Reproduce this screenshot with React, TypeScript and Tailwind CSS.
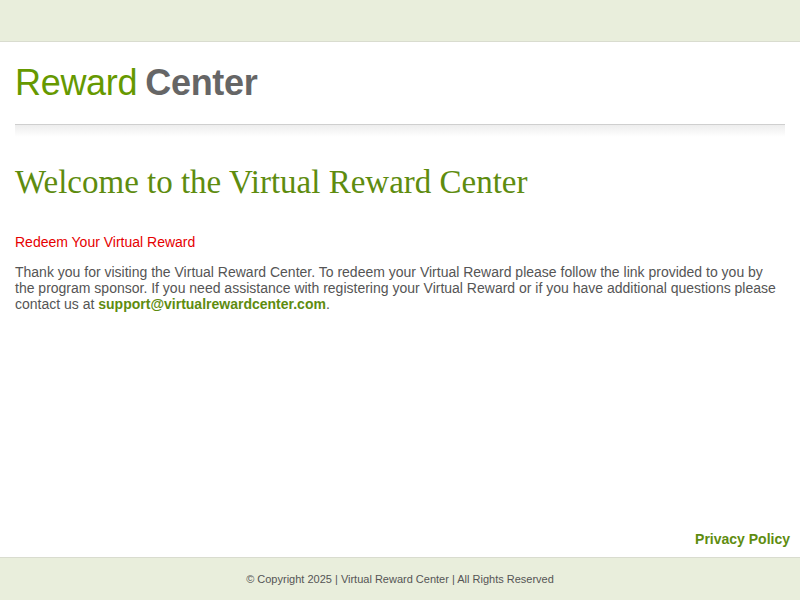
import React from 'react';

const App = () => {
  return (
    <div className="min-h-screen flex flex-col bg-white font-['Liberation_Sans',Arial,sans-serif]">
      <div className="h-[42px] bg-[#e9eedc] border-b border-[#d9dccf]" />

      <header className="px-[15px] pt-[20px]">
        <div className="flex text-[36px] leading-[41px] tracking-[-0.3px]">
          <span className="text-[#669900]">Reward</span>
          <span className="ml-[8px] text-[#666666] font-bold">Center</span>
        </div>
        <div className="mt-[21px] border-t border-[#cfcfcf]">
          <div className="h-[12px] bg-gradient-to-b from-[#ededed] to-white" />
        </div>
      </header>

      <main className="flex-1 px-[15px]">
        <h1 className="mt-[25px] font-['Liberation_Serif',Georgia,serif] text-[33px] leading-[40px] text-[#5e8c0f]">
          Welcome to the Virtual Reward Center
        </h1>
        <p className="mt-[32px] text-[14px] leading-[16px] text-[#e60000]">Redeem Your Virtual Reward</p>
        <p className="mt-[14px] text-[14px] leading-[16px] text-[#555555]">
          Thank you for visiting the Virtual Reward Center. To redeem your Virtual Reward please follow the link provided to you by
          the program sponsor. If you need assistance with registering your Virtual Reward or if you have additional questions please
          contact us at <a href="#" className="font-bold text-[#5e8c0f]">support@virtualrewardcenter.com</a>.
        </p>
      </main>

      <div className="flex justify-end px-[10px] pb-[10px]">
        <a href="#" className="text-[14px] leading-[16px] font-bold text-[#5e8c0f]">Privacy Policy</a>
      </div>

      <footer className="h-[43px] bg-[#e9eedc] border-t border-[#d9dccf] flex items-center justify-center">
        <span className="text-[11px] text-[#555555]">© Copyright 2025 | Virtual Reward Center | All Rights Reserved</span>
      </footer>
    </div>
  );
};

export default App;
